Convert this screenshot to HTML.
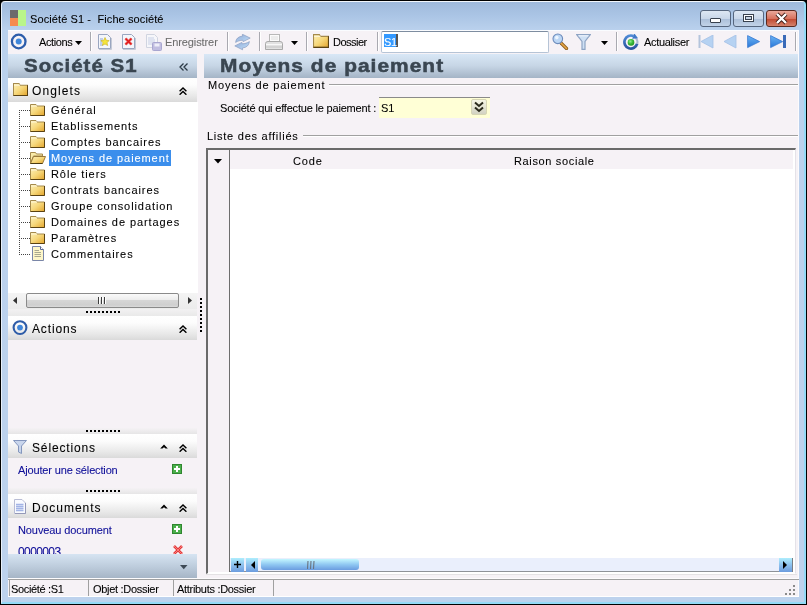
<!DOCTYPE html>
<html><head><meta charset="utf-8">
<style>
*{margin:0;padding:0;box-sizing:border-box}
html,body{width:807px;height:605px;overflow:hidden;background:#000}
body{position:relative;font-family:"Liberation Sans",sans-serif;font-size:11px;color:#000}
.a{position:absolute}
.t{position:absolute;white-space:nowrap;line-height:1;will-change:transform;-webkit-text-stroke:0.08px currentColor}
.tb{letter-spacing:-0.35px}
.tr{letter-spacing:0.85px}
.ph{font-size:12px;letter-spacing:0.85px}
.big{font-size:18px;font-weight:bold;color:#3a4651;-webkit-text-stroke:0.5px #3a4651}
#frame{left:1px;top:1px;width:805px;height:603px;border-radius:4px 4px 0 0;
 border-top:1px solid #f2f7fc;border-left:1px solid #e8f0fa;border-right:2px solid #94daf6;border-bottom:2px solid #94daf6;
 background:linear-gradient(#9fbadc 0px,#abc5e5 14px,#bad1ed 28px,#bdd2ed 100%)}
#client{left:8px;top:30px;width:791px;height:567px;background:#f6f2f6}
.sep{position:absolute;width:2px;border-left:1px solid #a9a9b0;border-right:1px solid #fff}
.hdr{position:absolute;background:linear-gradient(#d8e7f6,#c6d5e5 50%,#a4b4c6)}
.sech{position:absolute;background:linear-gradient(#ffffff 0%,#fcfcfc 30%,#e8e8e8 75%,#dadada 100%)}
.dots{position:absolute;height:2px;background:repeating-linear-gradient(90deg,#000 0 2px,transparent 2px 4px)}
.hd{position:absolute;left:19px;width:11px;height:1px;background:repeating-linear-gradient(90deg,#444 0 1px,transparent 1px 2px)}
.lnk{color:#0e0e98}
</style></head><body>
<svg width="0" height="0" style="position:absolute">
<defs>
<linearGradient id="fg" x1="0" y1="0" x2="1" y2="1"><stop offset="0" stop-color="#fdf0b8"/><stop offset="0.5" stop-color="#f6d77a"/><stop offset="1" stop-color="#e3a52c"/></linearGradient>
<symbol id="folder" viewBox="0 0 15 12"><path d="M0.5 0.5H6L7 2H14.5V11.5H0.5Z" fill="url(#fg)" stroke="#a58a4c"/><path d="M0.5 11.5H14.5V2" fill="none" stroke="#5a4212"/><path d="M1 2H7" stroke="#fdf6d8"/></symbol>
<symbol id="fopen" viewBox="0 0 16 12"><path d="M0.5 0.5H5.5L6.5 2H12.5V4H3.5L0.5 11.5Z" fill="#f9eaa8" stroke="#a58a4c"/><path d="M3.5 4.5H15.5L12.5 11.5H0.5Z" fill="url(#fg)" stroke="#9a7a3a"/><path d="M0.5 11.5H12.5" stroke="#4a3a12"/></symbol>
<symbol id="doc" viewBox="0 0 12 15"><path d="M0.5 0.5H8.5L11.5 3.5V14.5H0.5Z" fill="#fdf6c8" stroke="#7a86a8"/><path d="M8.5 0.5V3.5H11.5" fill="#fff" stroke="#5a6a98"/><path d="M2.5 4.5H7M2.5 6.5H9M2.5 8.5H9M2.5 10.5H9" stroke="#a8a890"/></symbol>
<symbol id="plus" viewBox="0 0 10 10"><rect x="0" y="0" width="10" height="10" fill="#3a9a3a"/><rect x="0.5" y="0.5" width="9" height="9" fill="#4bb04b" stroke="#2f862f"/><path d="M5 2V8M2 5H8" stroke="#fff" stroke-width="2"/></symbol>
<symbol id="redx" viewBox="0 0 12 10"><path d="M2 1L10 9M10 1L2 9" stroke="#e23a3a" stroke-width="2.6"/><path d="M2 1L10 9M10 1L2 9" stroke="#ff8a8a" stroke-width="0.8"/></symbol>
<symbol id="dchev" viewBox="0 0 8 8"><path d="M0.6 4.2L4 1L7.4 4.2M0.6 7.7L4 4.5L7.4 7.7" fill="none" stroke="#000" stroke-width="1.45"/></symbol>
<symbol id="chev" viewBox="0 0 8 5"><path d="M0.2 4.6L4 0.6L7.8 4.6H5.6L4 3.2L2.4 4.6Z" fill="#000"/></symbol>
</defs></svg>
<div id="frame" class="a"></div>
<!-- title -->
<div class="a" style="left:10px;top:10px;width:8px;height:8px;background:#6b6b6b"></div>
<div class="a" style="left:10px;top:18px;width:8px;height:8px;background:#f58a4e"></div>
<div class="a" style="left:18px;top:10px;width:8px;height:16px;background:#b9f58a"></div>
<span class="t" style="left:30px;top:14px;font-size:11px;letter-spacing:0.1px">Société S1 -&nbsp; Fiche société</span>
<!-- window buttons -->
<div class="a" style="left:700px;top:10px;width:31px;height:17px;border:1px solid #56667e;border-radius:3px;background:linear-gradient(#dde7f3,#c9d7e9 50%,#aabed8 51%,#c2d3e8)"></div>
<div class="a" style="left:710px;top:18px;width:11px;height:5px;border:1px solid #38414e;border-radius:1px;background:#fff"></div>
<div class="a" style="left:733px;top:10px;width:31px;height:17px;border:1px solid #56667e;border-radius:3px;background:linear-gradient(#dde7f3,#c9d7e9 50%,#aabed8 51%,#c2d3e8)"></div>
<div class="a" style="left:743px;top:14px;width:11px;height:8px;border:1px solid #38414e;background:#fff"></div><div class="a" style="left:745px;top:16px;width:7px;height:4px;border:1px solid #38414e;background:#c8d4e4"></div>
<div class="a" style="left:766px;top:10px;width:31px;height:17px;border:1px solid #5a2a20;border-radius:3px;background:linear-gradient(#e9a89a,#d8735f 50%,#c0472f 51%,#d5826c)"></div>
<svg class="a" style="left:774px;top:12px" width="15" height="13" viewBox="0 0 15 13"><path d="M3 2 L12 11 M12 2 L3 11" stroke="#3a1a14" stroke-width="4"/><path d="M3 2 L12 11 M12 2 L3 11" stroke="#fff" stroke-width="2.4"/></svg>

<div id="client" class="a"></div>
<!-- toolbar -->
<div class="a" style="left:8px;top:30px;width:791px;height:24px;background:#f6f2f6;border-top:1px solid #fafcff"></div>
<svg class="a" style="left:10px;top:33px" width="18" height="18" viewBox="0 0 18 18"><circle cx="8.7" cy="8.5" r="6.8" fill="none" stroke="#2d5dab" stroke-width="2.3"/><circle cx="8.7" cy="8.5" r="3" fill="#3f86da"/></svg>
<span class="t" style="left:39px;top:37px;letter-spacing:-0.4px">Actions</span>
<svg class="a" style="left:75px;top:41px" width="8" height="4" viewBox="0 0 8 4"><path d="M0 0H7L3.5 4Z" fill="#000"/></svg>
<div class="sep" style="left:90px;top:32px;height:19px"></div>
<span class="t" style="left:165px;top:37px;color:#6d6d6d;letter-spacing:-0.1px">Enregistrer</span>
<div class="sep" style="left:227px;top:32px;height:19px"></div>
<div class="sep" style="left:259px;top:32px;height:19px"></div>
<svg class="a" style="left:291px;top:41px" width="8" height="4" viewBox="0 0 8 4"><path d="M0 0H7L3.5 4Z" fill="#000"/></svg>
<div class="sep" style="left:306px;top:32px;height:19px"></div>
<svg class="a" style="left:313px;top:34px" width="16" height="14" viewBox="0 0 15 12" preserveAspectRatio="none"><use href="#folder"/></svg>
<span class="t" style="left:333px;top:37px;letter-spacing:-0.5px">Dossier</span>
<div class="sep" style="left:377px;top:32px;height:19px"></div>
<div class="a" style="left:381px;top:31px;width:168px;height:22px;background:#fff;border:1px solid #b6c4d6;border-top-color:#7e8da0;border-radius:2px"></div>
<div class="a" style="left:384px;top:34px;width:12px;height:13px;background:#3399ff"></div>
<div class="a" style="left:396px;top:34px;width:2px;height:13px;background:#555"></div>
<span class="t" style="left:384px;top:37px;color:#fff;letter-spacing:-0.4px">S1</span>
<svg class="a" style="left:601px;top:41px" width="8" height="4" viewBox="0 0 8 4"><path d="M0 0H7L3.5 4Z" fill="#000"/></svg>
<div class="sep" style="left:616px;top:32px;height:19px"></div>
<span class="t" style="left:644px;top:37px;letter-spacing:-0.33px">Actualiser</span>
<div class="sep" style="left:795px;top:32px;height:19px"></div>

<!-- toolbar icons -->
<svg class="a" style="left:98px;top:34px" width="14" height="16" viewBox="0 0 14 16"><path d="M0.5 0.5H9.5L12.5 3.5V14.5H0.5Z" fill="#f4f6fb" stroke="#9aa6c0"/><path d="M1 15.5H13.5V4" fill="none" stroke="#c6cad6"/><path d="M2 5H5M2 7H4M2 9H4M2 11H5" stroke="#8fa8d8"/><path d="M7 3.5L8.3 6.3L11.2 6.6L9 8.6L9.7 11.5L7 10L4.4 11.5L5 8.6L2.9 6.6L5.8 6.3Z" fill="#f4e43a" stroke="#c9b020" stroke-width="0.6"/></svg>
<svg class="a" style="left:122px;top:34px" width="14" height="16" viewBox="0 0 14 16"><path d="M0.5 0.5H9.5L12.5 3.5V14.5H0.5Z" fill="#f4f6fb" stroke="#9aa6c0"/><path d="M1 15.5H13.5V4" fill="none" stroke="#c6cad6"/><path d="M3.5 4.5L9.5 10.5M9.5 4.5L3.5 10.5" stroke="#f08a8a" stroke-width="3"/><path d="M3.5 4.5L9.5 10.5M9.5 4.5L3.5 10.5" stroke="#e01818" stroke-width="1.6"/></svg>
<svg class="a" style="left:146px;top:34px" width="16" height="17" viewBox="0 0 16 17"><path d="M0.5 0.5H8.5L11.5 3.5V13.5H0.5Z" fill="#f6f6fa" stroke="#d0d4e0"/><path d="M2 4H8M2 6H9M2 8H9M2 10H9" stroke="#c8d0e6"/><rect x="6.5" y="8.5" width="9" height="8" rx="1" fill="#c0bde0" stroke="#a9a6d0"/><rect x="8.5" y="9.5" width="5" height="3" fill="#eeeef8"/></svg>
<svg class="a" style="left:234px;top:34px" width="17" height="17" viewBox="0 0 17 17"><defs><linearGradient id="rg" x1="0" y1="0" x2="1" y2="1"><stop offset="0" stop-color="#8eaad6"/><stop offset="1" stop-color="#c4e0fa"/></linearGradient></defs><path d="M1.6 8.4C2 4.6 4.5 2.4 8.6 2.0L8.4 0.2L16.2 4.1L9.1 7.6L8.9 6.2C6 6.3 3.8 7 1.6 8.4Z" fill="url(#rg)" stroke="#8b9ec2" stroke-width="0.7"/><path d="M15.4 7.6C15 11.4 12.5 13.6 8.4 14.0L8.6 15.8L0.8 11.9L7.9 8.4L8.1 9.8C11 9.7 13.2 9 15.4 7.6Z" fill="url(#rg)" stroke="#8b9ec2" stroke-width="0.7"/></svg>
<svg class="a" style="left:265px;top:34px" width="18" height="17" viewBox="0 0 18 17"><rect x="4.5" y="0.5" width="10" height="9" fill="#fbfbfb" stroke="#b8b8b8"/><path d="M6 3H13M6 5H13" stroke="#dedede"/><path d="M0.5 9.5Q0.5 7.5 3 7.5H15Q17.5 7.5 17.5 9.5V15.5H0.5Z" fill="#e2e2e2" stroke="#a9a9a9"/><path d="M1 10.5H17" stroke="#f8f8f8"/><path d="M1 13H17" stroke="#c4c4c4"/></svg>
<svg class="a" style="left:552px;top:33px" width="17" height="17" viewBox="0 0 17 17"><path d="M9 10L14.5 15.5" stroke="#8a5a1a" stroke-width="3.2" stroke-linecap="round"/><path d="M9 10L14.5 15.5" stroke="#e8a848" stroke-width="1.6" stroke-linecap="round"/><circle cx="5.8" cy="5.8" r="4.8" fill="#bcd6f4" stroke="#6d8cbc" stroke-width="1.1"/><circle cx="4.8" cy="4.6" r="1.8" fill="#eef6ff"/></svg>
<svg class="a" style="left:576px;top:34px" width="15" height="16" viewBox="0 0 15 16"><path d="M0.7 0.7H14.3L9 7.5V15.3H6V7.5Z" fill="#cfe0f4" stroke="#8ea4c4" stroke-width="1.2"/><path d="M2.5 1.8H12.5" stroke="#f4f8ff"/></svg>
<svg class="a" style="left:622px;top:34px" width="18" height="17" viewBox="0 0 18 17"><defs><linearGradient id="ag" x1="0" y1="0" x2="0" y2="1"><stop offset="0" stop-color="#4d8ad6"/><stop offset="1" stop-color="#2a55a0"/></linearGradient><radialGradient id="gg" cx="0.4" cy="0.35" r="0.7"><stop offset="0" stop-color="#8ee88e"/><stop offset="0.5" stop-color="#3cbc3c"/><stop offset="1" stop-color="#1f8f1f"/></radialGradient></defs><path d="M15.2 9.7A6.5 6.5 0 1 1 11.6 2.1" fill="none" stroke="url(#ag)" stroke-width="2.7"/><path d="M12.6 2.9A6.5 6.5 0 0 1 15.2 9.7" fill="none" stroke="#a9b9d2" stroke-width="2"/><path d="M10.2 4.8L12.4 -0.5L16 4.2Z" fill="#3f78c8"/><circle cx="9" cy="8.4" r="3.3" fill="url(#gg)"/></svg>
<svg class="a" style="left:698px;top:35px" width="16" height="14" viewBox="0 0 16 14"><rect x="0.5" y="0" width="2" height="13" fill="#b4c4dc"/><path d="M15 0V13L3 6.5Z" fill="#b6d2f2" stroke="#a4c0e6" stroke-width="0.8"/></svg>
<svg class="a" style="left:723px;top:35px" width="14" height="14" viewBox="0 0 14 14"><path d="M13 0V13L1 6.5Z" fill="#b6d2f2" stroke="#a4c0e6" stroke-width="0.8"/></svg>
<svg class="a" style="left:747px;top:35px" width="14" height="14" viewBox="0 0 14 14"><defs><linearGradient id="ng" x1="0" y1="0" x2="0" y2="1"><stop offset="0" stop-color="#6cb4f4"/><stop offset="1" stop-color="#2a78d8"/></linearGradient></defs><path d="M0.6 0.6V12.6L12.6 6.6Z" fill="url(#ng)" stroke="#3a7ad0" stroke-width="0.8"/></svg>
<svg class="a" style="left:770px;top:35px" width="17" height="14" viewBox="0 0 17 14"><path d="M0.6 0.6V12.6L12.6 6.6Z" fill="url(#ng)" stroke="#3a7ad0" stroke-width="0.8"/><rect x="13" y="0" width="3" height="13" fill="#3a6ab8"/></svg>

<!-- left panel -->
<div class="hdr" style="left:8px;top:54px;width:189px;height:24px"></div>
<span class="t big" style="left:24px;top:57px;letter-spacing:0.9px;transform:scaleX(1.135);transform-origin:0 0">Société S1</span>
<svg class="a" style="left:179px;top:63px" width="9" height="8" viewBox="0 0 9 8"><path d="M4.5 0.5L1 4L4.5 7.5M8.5 0.5L5 4L8.5 7.5" fill="none" stroke="#2c3a46" stroke-width="1.3"/></svg>
<div class="sech" style="left:8px;top:78px;width:189px;height:24px"></div>
<svg class="a" style="left:13px;top:83px" width="15" height="13" viewBox="0 0 15 12" preserveAspectRatio="none"><use href="#folder"/></svg>
<span class="t ph" style="left:32px;top:85px;letter-spacing:1.1px">Onglets</span>
<svg class="a" style="left:179px;top:87px" width="8" height="8"><use href="#dchev"/></svg>
<div class="a" style="left:798px;top:31px;width:1px;height:566px;background:#fcfbfd"></div>
<div class="a" style="left:8px;top:102px;width:190px;height:191px;background:#fff"></div>
<div class="a" style="left:19px;top:110px;width:1px;height:144px;background:repeating-linear-gradient(#444 0 1px,transparent 1px 2px)"></div>
<div class="hd" style="top:110px"></div>
<svg class="a" style="left:30px;top:104px" width="15" height="12"><use href="#folder"/></svg>
<span class="t tr" style="letter-spacing:0.92px;left:51px;top:105px">Général</span>
<div class="hd" style="top:126px"></div>
<svg class="a" style="left:30px;top:120px" width="15" height="12"><use href="#folder"/></svg>
<span class="t tr" style="letter-spacing:0.92px;left:51px;top:121px">Etablissements</span>
<div class="hd" style="top:142px"></div>
<svg class="a" style="left:30px;top:136px" width="15" height="12"><use href="#folder"/></svg>
<span class="t tr" style="letter-spacing:0.92px;left:51px;top:137px">Comptes bancaires</span>
<div class="hd" style="top:158px"></div>
<svg class="a" style="left:30px;top:152px" width="16" height="12"><use href="#fopen"/></svg>
<div class="a" style="left:49px;top:150px;width:122px;height:16px;background:#3b8eec"></div>
<span class="t tr" style="letter-spacing:0.92px;left:51px;top:153px;color:#fff">Moyens de paiement</span>
<div class="hd" style="top:174px"></div>
<svg class="a" style="left:30px;top:168px" width="15" height="12"><use href="#folder"/></svg>
<span class="t tr" style="letter-spacing:0.92px;left:51px;top:169px">Rôle tiers</span>
<div class="hd" style="top:190px"></div>
<svg class="a" style="left:30px;top:184px" width="15" height="12"><use href="#folder"/></svg>
<span class="t tr" style="letter-spacing:0.92px;left:51px;top:185px">Contrats bancaires</span>
<div class="hd" style="top:206px"></div>
<svg class="a" style="left:30px;top:200px" width="15" height="12"><use href="#folder"/></svg>
<span class="t tr" style="letter-spacing:0.92px;left:51px;top:201px">Groupe consolidation</span>
<div class="hd" style="top:222px"></div>
<svg class="a" style="left:30px;top:216px" width="15" height="12"><use href="#folder"/></svg>
<span class="t tr" style="letter-spacing:0.92px;left:51px;top:217px">Domaines de partages</span>
<div class="hd" style="top:238px"></div>
<svg class="a" style="left:30px;top:232px" width="15" height="12"><use href="#folder"/></svg>
<span class="t tr" style="letter-spacing:0.92px;left:51px;top:233px">Paramètres</span>
<div class="hd" style="top:254px"></div>
<svg class="a" style="left:32px;top:246px" width="12" height="15"><use href="#doc"/></svg>
<span class="t tr" style="letter-spacing:0.92px;left:51px;top:249px">Commentaires</span>
<!-- h scrollbar -->
<div class="a" style="left:8px;top:293px;width:189px;height:16px;background:linear-gradient(#f4f4f4,#ebebeb)"></div>
<svg class="a" style="left:13px;top:297px" width="5" height="7"><path d="M4 0V7L0 3.5Z" fill="#333"/></svg>
<div class="a" style="left:26px;top:293px;width:153px;height:15px;border:1px solid #8a8a8a;border-radius:2px;background:linear-gradient(#fafafa,#ececec 45%,#d6d6d6 50%,#cfcfcf 85%,#dadada)"></div>
<div class="a" style="left:98px;top:297px;width:8px;height:7px;background:repeating-linear-gradient(90deg,#3c3c3c 0 1px,#fff 1px 2px,transparent 2px 3px)"></div>
<svg class="a" style="left:188px;top:297px" width="5" height="7"><path d="M0 0V7L4 3.5Z" fill="#333"/></svg>
<div class="a" style="left:8px;top:309px;width:189px;height:7px;background:linear-gradient(#f2f1f2,#e9e9e9)"></div>
<div class="dots" style="left:86px;top:311px;width:34px"></div>
<div class="a" style="left:200px;top:298px;width:2px;height:35px;background:repeating-linear-gradient(#000 0 2px,transparent 2px 4px)"></div>

<!-- actions pane -->
<div class="sech" style="left:8px;top:316px;width:189px;height:24px"></div>
<svg class="a" style="left:12px;top:320px" width="16" height="16" viewBox="0 0 16 16"><circle cx="8" cy="7.6" r="6.4" fill="none" stroke="#2e5ca8" stroke-width="2.1"/><circle cx="8" cy="7.6" r="2.9" fill="#3f86da"/></svg>
<span class="t ph" style="left:32px;top:323px">Actions</span>
<svg class="a" style="left:179px;top:325px" width="8" height="8"><use href="#dchev"/></svg>
<div class="a" style="left:8px;top:428px;width:189px;height:6px;background:linear-gradient(#f5f2f5,#e6e5e6)"></div>
<div class="dots" style="left:86px;top:430px;width:34px"></div>

<!-- selections pane -->
<div class="sech" style="left:8px;top:434px;width:189px;height:24px"></div>
<svg class="a" style="left:13px;top:440px" width="14" height="14" viewBox="0 0 14 14"><path d="M0.5 0.5H13.5L8.5 6V13.5L5.5 12V6Z" fill="#c9d6ec" stroke="#8396bd"/></svg>
<span class="t ph" style="left:32px;top:442px">Sélections</span>
<svg class="a" style="left:160px;top:444px" width="8" height="5"><use href="#chev"/></svg>
<svg class="a" style="left:179px;top:444px" width="8" height="8"><use href="#dchev"/></svg>
<span class="t lnk" style="left:18px;top:465px;letter-spacing:-0.15px">Ajouter une sélection</span>
<svg class="a" style="left:172px;top:464px" width="10" height="10"><use href="#plus"/></svg>
<div class="a" style="left:8px;top:488px;width:189px;height:6px;background:linear-gradient(#f5f2f5,#e6e5e6)"></div>
<div class="dots" style="left:86px;top:490px;width:34px"></div>

<!-- documents pane -->
<div class="sech" style="left:8px;top:494px;width:189px;height:24px"></div>
<svg class="a" style="left:14px;top:499px" width="12" height="15" viewBox="0 0 12 15"><path d="M0.5 0.5H8L11.5 4V14.5H0.5Z" fill="#f8faff" stroke="#b8bcd4"/><path d="M1 14.5H11.5V4" fill="none" stroke="#9498b8"/><path d="M2 5.5H9.5M2 7.5H9.5M2 9.5H9.5M2 11.5H9.5" stroke="#a2b4e6" stroke-width="1.3"/></svg>
<span class="t ph" style="left:32px;top:502px;letter-spacing:0.98px">Documents</span>
<svg class="a" style="left:160px;top:504px" width="8" height="5"><use href="#chev"/></svg>
<svg class="a" style="left:179px;top:504px" width="8" height="8"><use href="#dchev"/></svg>
<span class="t lnk" style="left:18px;top:525px;letter-spacing:-0.1px">Nouveau document</span>
<svg class="a" style="left:172px;top:524px" width="10" height="10"><use href="#plus"/></svg>
<div class="a" style="left:8px;top:540px;width:189px;height:14px;overflow:hidden">
<span class="t lnk" style="left:10px;top:6px;font-size:12px;letter-spacing:-0.6px">0000003</span>
<svg class="a" style="left:164px;top:5px" width="12" height="10"><use href="#redx"/></svg>
</div>
<div class="a" style="left:8px;top:554px;width:189px;height:24px;background:linear-gradient(#d6e4f2,#bccbdb 55%,#a6b5c6)"></div>
<svg class="a" style="left:180px;top:565px" width="8" height="5"><path d="M0 0H7.5L3.75 4.2Z" fill="#3e4a56"/></svg>

<!-- right header -->
<div class="hdr" style="left:204px;top:54px;width:594px;height:24px"></div>
<span class="t big" style="left:220px;top:57px;letter-spacing:0.9px;transform:scaleX(1.16);transform-origin:0 0">Moyens de paiement</span>

<!-- group box 1 -->
<span class="t tr" style="left:208px;top:80px">Moyens de paiement</span>
<div class="a" style="left:329px;top:84px;width:469px;height:2px;border-top:1px solid #a0a0a0;border-bottom:1px solid #fff"></div>
<span class="t" style="left:220px;top:103px;letter-spacing:-0.19px">Société qui effectue le paiement :</span>
<div class="a" style="left:379px;top:97px;width:111px;height:21px;background:#ffffd6;border-top:1px solid #8a8a8a"></div>
<span class="t" style="left:381px;top:103px">S1</span>
<div class="a" style="left:471px;top:99px;width:16px;height:16px;border:1px solid #d6d6b4;border-radius:2px;background:linear-gradient(#f6f6e6,#d2d2c2)"></div>
<svg class="a" style="left:474px;top:101px" width="10" height="12" viewBox="0 0 10 12"><path d="M1 1.5L5 5L9 1.5M1 6.5L5 10L9 6.5" fill="none" stroke="#2a2a1c" stroke-width="2"/></svg>

<!-- group box 2 -->
<span class="t tr" style="left:207px;top:131px;letter-spacing:0.75px">Liste des affiliés</span>
<div class="a" style="left:303px;top:135px;width:495px;height:2px;border-top:1px solid #a0a0a0;border-bottom:1px solid #fff"></div>

<!-- grid -->
<div class="a" style="left:206px;top:148px;width:590px;height:426px;border-left:2px solid #6a6a6a;border-top:2px solid #6a6a6a;border-right:1px solid #e4e2e8;border-bottom:1px solid #fff;background:#fff"></div>
<div class="a" style="left:208px;top:150px;width:22px;height:422px;background:#f6f2f6;border-right:1px solid #6e6e6e"></div>
<div class="a" style="left:230px;top:150px;width:563px;height:19px;background:#f6f2f6"></div>
<svg class="a" style="left:214px;top:159px" width="8" height="5"><path d="M0 0H8L4 4.5Z" fill="#000"/></svg>
<span class="t tr" style="left:293px;top:156px">Code</span>
<span class="t tr" style="left:514px;top:156px;letter-spacing:0.65px">Raison sociale</span>
<div class="a" style="left:230px;top:558px;width:563px;height:14px;background:#eaeffc;border-bottom:1px solid #8e9298"></div>
<div class="a" style="left:231px;top:558px;width:13px;height:14px;background:linear-gradient(#aeeefd,#8cc0ee 50%,#6d9cde)"></div>
<svg class="a" style="left:234px;top:561px" width="7" height="7"><path d="M0 3.5H7M3.5 0V7" stroke="#000" stroke-width="1.4"/></svg>
<div class="a" style="left:246px;top:558px;width:12px;height:14px;background:linear-gradient(#aeeefd,#8cc0ee 50%,#6d9cde)"></div>
<svg class="a" style="left:251px;top:561px" width="4" height="8"><path d="M4 0V8L0 4Z" fill="#000"/></svg>
<div class="a" style="left:261px;top:559px;width:98px;height:11px;border-radius:3px;background:linear-gradient(#c4f6ff,#90c8f2 50%,#6a9ce0)"></div>
<svg class="a" style="left:306px;top:561px" width="9" height="8"><path d="M2 0L1.5 8M5 0L4.5 8M8 0L7.5 8" stroke="#6a7480" stroke-width="1.1"/></svg>
<div class="a" style="left:779px;top:558px;width:13px;height:14px;background:linear-gradient(#aeeefd,#8cc0ee 50%,#6d9cde)"></div><div class="a" style="left:792px;top:558px;width:1px;height:14px;background:#7a7e84"></div>
<svg class="a" style="left:783px;top:561px" width="4" height="8"><path d="M0 0V8L4 4Z" fill="#000"/></svg>

<!-- status bar -->
<div class="a" style="left:8px;top:578px;width:791px;height:1px;background:#fdfcfd"></div><div class="a" style="left:206px;top:574px;width:591px;height:1px;background:#e4e2e4"></div>
<div class="a" style="left:8px;top:579px;width:791px;height:1px;background:#a0a0a0"></div>
<div class="a" style="left:8px;top:596px;width:791px;height:1px;background:#fff"></div>
<div class="a" style="left:9px;top:580px;width:1px;height:16px;background:#a0a0a0"></div>
<div class="a" style="left:88px;top:580px;width:1px;height:16px;background:#a0a0a0"></div>
<div class="a" style="left:173px;top:580px;width:1px;height:16px;background:#a0a0a0"></div>
<div class="a" style="left:273px;top:580px;width:1px;height:16px;background:#a0a0a0"></div>
<span class="t" style="left:11px;top:584px;letter-spacing:-0.34px">Société :S1</span>
<span class="t" style="left:93px;top:584px;letter-spacing:-0.3px">Objet :Dossier</span>
<span class="t" style="left:177px;top:584px;letter-spacing:-0.3px">Attributs :Dossier</span>
<svg class="a" style="left:785px;top:585px" width="10" height="10" viewBox="0 0 10 10"><path d="M8 0h2v2h-2zM4 4h2v2h-2zM8 4h2v2h-2zM0 8h2v2h-2zM4 8h2v2h-2zM8 8h2v2h-2z" fill="#8a8a8a"/></svg>
</body></html>
